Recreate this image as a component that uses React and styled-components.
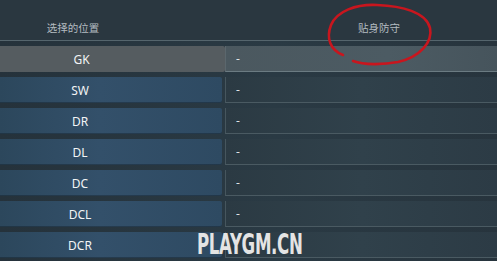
import React from "react";
import styled, { createGlobalStyle } from "styled-components";

const GlobalStyle = createGlobalStyle`
  html, body {
    margin: 0;
    padding: 0;
    background: #26323b;
  }
  body {
    font-family: "Noto Sans", "Noto Sans CJK SC", sans-serif;
  }
`;

const Screen = styled.div`
  position: relative;
  width: 497px;
  height: 261px;
  overflow: hidden;
  background: linear-gradient(90deg, #25323b 0%, #2a3a44 55%, #27343d 100%);
`;

const Header = styled.div`
  display: flex;
  height: 40px;
  border-bottom: 1px solid #55656d;
  background: #2a3740;
`;

const HeadCell = styled.div`
  width: ${({ w }) => w}px;
  padding-left: ${({ pl }) => pl || 0}px;
  box-sizing: border-box;
  display: flex;
  align-items: flex-end;
  justify-content: ${({ left }) => (left ? "flex-start" : "center")};
  padding-bottom: 5px;
  color: #b4bcc1;
  font-size: 10.5px;
  font-family: "Noto Sans CJK SC", "Noto Sans", sans-serif;
`;

const Rows = styled.div`
  display: flex;
  flex-direction: column;
  gap: 5px;
  padding-top: 5px;
`;

const Row = styled.div`
  display: flex;
  height: 26px;
`;

const PosCell = styled.div`
  width: ${({ active }) => (active ? 225 : 222)}px;
  margin-right: ${({ active }) => (active ? 0 : 3)}px;
  padding-right: 62px;
  box-sizing: border-box;
  display: flex;
  align-items: center;
  justify-content: center;
  color: #f2f4f5;
  font-size: 12px;
  border-radius: 0 2px 2px 0;
  background: ${({ active }) =>
    active
      ? "#555c60"
      : "linear-gradient(90deg, #2c475c 0%, #33506a 45%, #2e4a62 100%)"};
  box-shadow: ${({ active }) =>
    active ? "none" : "inset 0 -1px 0 rgba(0,0,0,0.25)"};
`;

const ValueCell = styled.div`
  flex: 1;
  display: flex;
  align-items: center;
  padding-left: 10px;
  color: #dfe3e5;
  font-size: 12px;
  border-left: 1px solid ${({ active }) => (active ? "#5b676d" : "#46565e")};
  border-bottom: 1px solid ${({ active }) => (active ? "#6b7b82" : "#4a5a62")};
  background: ${({ active }) =>
    active
      ? "linear-gradient(90deg, #4b585f 0%, #4c5b63 60%, #46545c 100%)"
      : "linear-gradient(90deg, #2b3a43 0%, #30414b 50%, #2c3b45 100%)"};
`;

const Watermark = styled.div`
  position: absolute;
  left: 197px;
  top: 231px;
  font-family: "DejaVu Sans Condensed", "DejaVu Sans", sans-serif;
  font-weight: bold;
  font-size: 28px;
  letter-spacing: -0.5px;
  color: #e4e4e4;
  transform: scaleX(0.66);
  transform-origin: left top;
  line-height: 1;
`;

const Circle = styled.svg`
  position: absolute;
  left: 322px;
  top: 0;
`;

const positions = ["GK", "SW", "DR", "DL", "DC", "DCL", "DCR"];

export default function App() {
  return (
    <Screen>
      <GlobalStyle />
      <Header>
        <HeadCell w={146}>选择的位置</HeadCell>
        <HeadCell w={351} left pl={212}>
          贴身防守
        </HeadCell>
      </Header>
      <Rows>
        {positions.map((p, i) => (
          <Row key={p}>
            <PosCell active={i === 0}>{p}</PosCell>
            <ValueCell active={i === 0}>{i < 6 ? "-" : ""}</ValueCell>
          </Row>
        ))}
      </Rows>
      <Circle width="120" height="72" viewBox="0 0 120 72">
        <path
          d="M21 55 C8 50 4 38 9 25 C15 11 34 4 55 5 C80 6 104 12 108 28 C111 42 98 57 76 62 C60 65 42 65 31 61"
          fill="none"
          stroke="#c8161e"
          strokeWidth="2.6"
          strokeLinecap="round"
        />
      </Circle>
      <Watermark>PLAYGM.CN</Watermark>
    </Screen>
  );
}
